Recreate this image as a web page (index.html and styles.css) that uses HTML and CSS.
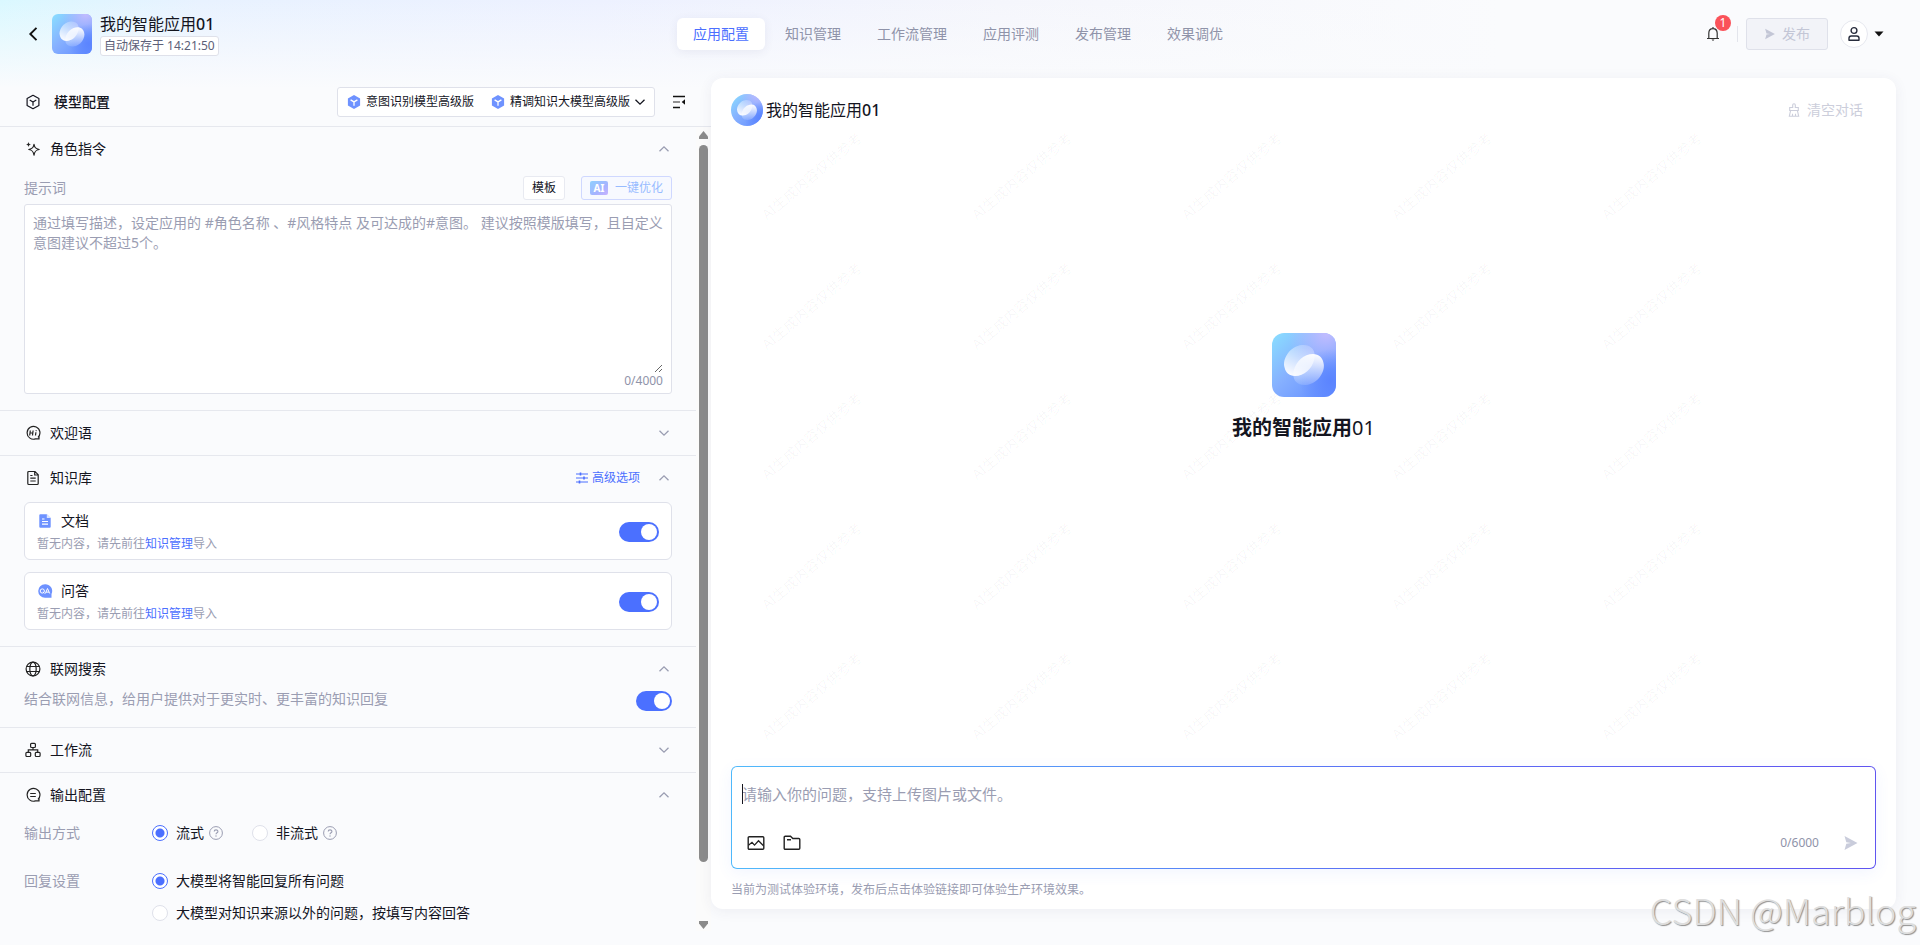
FILE: index.html
```html
<!DOCTYPE html>
<html lang="zh-CN">
<head>
<meta charset="utf-8">
<meta name="viewport" content="width=device-width, initial-scale=1">
<title>我的智能应用01</title>
<link rel="stylesheet" href="styles.css">
</head>
<body>
<svg class="sprite" aria-hidden="true">
  <defs>
    <linearGradient id="lg-base" x1="0" y1="0" x2="1" y2="1">
      <stop offset="0" stop-color="#8adfff"/><stop offset="0.45" stop-color="#86b0ff"/><stop offset="1" stop-color="#5f8aff"/>
    </linearGradient>
    <radialGradient id="lg-violet" cx="0.85" cy="0" r="0.6">
      <stop offset="0" stop-color="#c3bcff"/><stop offset="1" stop-color="#b4b8ff" stop-opacity="0"/>
    </radialGradient>
    <radialGradient id="lg-blue" cx="0.92" cy="0.75" r="0.5">
      <stop offset="0" stop-color="#5b84ff"/><stop offset="1" stop-color="#5b84ff" stop-opacity="0"/>
    </radialGradient>
    <linearGradient id="lg-a" x1="0.7" y1="0" x2="0.3" y2="1">
      <stop offset="0" stop-color="#fff" stop-opacity="0.1"/><stop offset="1" stop-color="#fff" stop-opacity="0.95"/>
    </linearGradient>
    <linearGradient id="lg-b" x1="0.6" y1="0" x2="0.4" y2="1">
      <stop offset="0" stop-color="#fff" stop-opacity="0.95"/><stop offset="1" stop-color="#fff" stop-opacity="0.15"/>
    </linearGradient>
    <linearGradient id="lg-ai" x1="0" y1="0" x2="1" y2="1">
      <stop offset="0" stop-color="#8fd0ff"/><stop offset="0.6" stop-color="#a5b4ff"/><stop offset="1" stop-color="#c9b2ff"/>
    </linearGradient>
  </defs>
  <symbol id="logo" viewBox="0 0 64 64">
    <rect width="64" height="64" fill="url(#lg-base)"/>
    <rect width="64" height="64" fill="url(#lg-violet)"/>
    <rect width="64" height="64" fill="url(#lg-blue)"/>
    <path d="M12.600 34.500C10 26 18 13 30 12C40 11.500 44 18 42.400 26C40 36 32 43 23 43C17 43 13.500 39 12.600 34.500Z" fill="#fff" fill-opacity="0.15"/>
    <path d="M12.600 34.500C10 26 18 13 30 12C40 11.500 44 18 42.400 26C40 36 32 43 23 43C17 43 13.500 39 12.600 34.500Z" fill="url(#lg-a)"/>
    <path d="M51.400 29.500C54 38 46 51 34 52C24 52.500 20 46 21.600 38C24 28 32 21 41 21C47 21 50.500 25 51.400 29.500Z" fill="url(#lg-b)"/>
  </symbol>
  <symbol id="up" viewBox="0 0 16 16"><path d="M3.500 10.300L8 5.800l4.500 4.500" fill="none" stroke="currentColor" stroke-width="1.300"/></symbol>
  <symbol id="down" viewBox="0 0 16 16"><path d="M3.500 5.700L8 10.200l4.500-4.500" fill="none" stroke="currentColor" stroke-width="1.300"/></symbol>
  <symbol id="cube" viewBox="0 0 16 16"><path d="M8 1.300l5.900 3.300v6.800L8 14.700l-5.900-3.300V4.600z" fill="none" stroke="currentColor" stroke-width="1.200" stroke-linejoin="round"/><path d="M4.700 6.100L8 8l3.300-1.900M8 8v3.700" fill="none" stroke="currentColor" stroke-width="1.200"/></symbol>
  <symbol id="cube-fill" viewBox="0 0 16 16"><path d="M8 1l6.100 3.500v7L8 15l-6.100-3.500v-7z" fill="#6e92ff"/><path d="M4.600 5.900L8 7.900l3.400-2M8 7.900v3.900" fill="none" stroke="#fff" stroke-width="1.300"/></symbol>
  <symbol id="help" viewBox="0 0 16 16"><circle cx="8" cy="8" r="6.400" fill="none" stroke="currentColor" stroke-width="1"/><path d="M6.200 6.500C6.200 4.300 9.900 4.300 9.900 6.400C9.900 7.700 8 7.700 8 9.200" fill="none" stroke="currentColor" stroke-width="1.100"/><circle cx="8" cy="11" r="0.700" fill="currentColor"/></symbol>
  <symbol id="plane" viewBox="0 0 16 16"><path d="M1.500 1l13 7-13 7 1.800-6.200L8 8 3.300 7.200z" fill="currentColor"/></symbol>
</svg>

<header class="topbar">
  <div class="brand">
    <button class="icon-btn back" aria-label="返回"><svg width="16" height="16" viewBox="0 0 16 16"><path d="M10.500 1.800L4.300 8l6.200 6.200" fill="none" stroke="#111" stroke-width="1.900"/></svg></button>
    <svg class="logo logo-sm"><use href="#logo"/></svg>
    <div class="brand-text">
      <h1 class="app-name">我的智能应用<span class="num">01</span></h1>
      <span class="saved">自动保存于 14:21:50</span>
    </div>
  </div>
  <nav class="tabs">
    <a class="tab active" href="#">应用配置</a>
    <a class="tab" href="#">知识管理</a>
    <a class="tab" href="#">工作流管理</a>
    <a class="tab" href="#">应用评测</a>
    <a class="tab" href="#">发布管理</a>
    <a class="tab" href="#">效果调优</a>
  </nav>
  <div class="actions">
    <button class="icon-btn bell" aria-label="通知">
      <svg width="16" height="16" viewBox="0 0 16 16"><path d="M2 12.500h12M3.800 12.300V7.200C3.800 1 12.200 1 12.200 7.200v5.100M8 1v1.500" fill="none" stroke="#333" stroke-width="1.200"/><path d="M6.500 13.500h3L8 15z" fill="#333"/></svg>
      <span class="badge">1</span>
    </button>
    <span class="divider"></span>
    <button class="publish" disabled><svg width="12" height="12"><use href="#plane"/></svg>发布</button>
    <button class="icon-btn user" aria-label="账户">
      <span class="user-ring"><svg width="14" height="16" viewBox="0 0 14 16"><circle cx="7" cy="4.500" r="2.900" fill="none" stroke="#272c3c" stroke-width="1.400"/><path d="M2 14.300v-2.100c0-1.500.8-2.200 2.200-2.200h5.600c1.400 0 2.200.7 2.200 2.200v2.100z" fill="none" stroke="#272c3c" stroke-width="1.400" stroke-linejoin="round"/></svg></span>
      <svg width="10" height="6" viewBox="0 0 10 6"><path d="M0.500 0.500h9L5 5.500z" fill="#111"/></svg>
    </button>
  </div>
</header>

<main class="workspace">
  <section class="config">
    <div class="config-head">
      <svg class="ico"><use href="#cube"/></svg>
      <h2 class="config-title">模型配置</h2>
      <button class="models">
        <svg class="ico"><use href="#cube-fill"/></svg><span class="model">意图识别模型高级版</span>
        <svg class="ico"><use href="#cube-fill"/></svg><span>精调知识大模型高级版</span>
        <svg class="ico ico-chev"><use href="#down"/></svg>
      </button>
      <button class="icon-btn" aria-label="收起"><svg width="16" height="16" viewBox="0 0 16 16"><path d="M2 2.500h12M2 13.500h7" stroke="#111" stroke-width="1.300"/><path d="M2 8h7" stroke="#777" stroke-width="1.600"/><path d="M14 5.300v5.400L10.700 8z" fill="#111"/></svg></button>
    </div>

    <div class="config-main">
      <div class="sections">
        <section class="section">
          <div class="section-head">
            <svg class="ico" viewBox="0 0 16 16"><path d="M9 3.400c.6 3.400 1.700 4.400 5.200 5.100-3.500.7-4.600 1.800-5.200 5.600-.6-3.800-1.700-4.900-5.200-5.600C7.300 7.800 8.400 6.800 9 3.400z" fill="none" stroke="#222" stroke-width="1.200" stroke-linejoin="round"/><path d="M3.500 .8c.3 1.800.9 2.400 2.600 2.700-1.700.3-2.300.9-2.600 2.700C3.200 4.400 2.600 3.800.9 3.500 2.600 3.200 3.200 2.600 3.500.8z" fill="#222"/></svg>
            <h3 class="section-title">角色指令</h3>
            <button class="icon-btn fold" aria-label="收起"><svg class="ico"><use href="#up"/></svg></button>
          </div>
          <div class="prompt-bar">
            <label class="muted" for="prompt">提示词</label>
            <button class="btn-template">模板</button>
            <button class="btn-ai" disabled><svg width="18" height="14" viewBox="0 0 18 14"><rect width="18" height="14" rx="2" fill="url(#lg-ai)"/><text class="ai-mark" x="9" y="11" text-anchor="middle">AI</text></svg>一键优化</button>
          </div>
          <div class="prompt-box">
            <textarea id="prompt" class="prompt" placeholder="通过填写描述，设定应用的 #角色名称 、#风格特点 及可达成的#意图。 建议按照模版填写，且自定义意图建议不超过5个。"></textarea>
            <span class="count">0/4000</span>
          </div>
        </section>

        <section class="section folded">
          <div class="section-head">
            <svg class="ico" viewBox="0 0 16 16"><path d="M13 12.400A6.400 6.400 0 1 0 10.500 13.900H14V11" fill="none" stroke="#222" stroke-width="1.200"/><path d="M5.300 5.500l-.6 5M8.100 5.500l-.6 5M5 8h2.800M10.900 7.300l-.4 3.200M11.200 5.200l-.1.900" stroke="#222" stroke-width="1.200"/></svg>
            <h3 class="section-title">欢迎语</h3>
            <button class="icon-btn fold" aria-label="展开"><svg class="ico"><use href="#down"/></svg></button>
          </div>
        </section>

        <section class="section">
          <div class="section-head">
            <svg class="ico" viewBox="0 0 16 16"><path d="M10 1.500H3.800a1 1 0 0 0-1 1v11a1 1 0 0 0 1 1h8.400a1 1 0 0 0 1-1V4.700zM9.700 1.500V5h3.500M5.300 5.500h2.200M5.300 8.200h5.400M5.300 11h5.400" fill="none" stroke="#222" stroke-width="1.200"/></svg>
            <h3 class="section-title">知识库</h3>
            <button class="advanced"><svg width="12" height="12" viewBox="0 0 12 12"><path d="M0 2h12M0 6h12M0 10h12" stroke="#4b6fff" stroke-width="1"/><path d="M4.500.5v3M8 4.500v3M3.500 8.500v3" stroke="#4b6fff" stroke-width="1.600"/></svg>高级选项</button>
            <button class="icon-btn fold" aria-label="收起"><svg class="ico"><use href="#up"/></svg></button>
          </div>
          <div class="cards">
            <div class="card">
              <div class="card-text">
                <label class="card-title" for="sw-doc"><svg class="ico" viewBox="0 0 16 16"><path d="M3.300 1.200h6.500l3.900 3.900v8.600a1 1 0 0 1-1 1H3.300a1 1 0 0 1-1-1V2.200a1 1 0 0 1 1-1z" fill="#6e92ff"/><path d="M9.800 1.200V5h3.900z" fill="#dbe4ff"/><path d="M5 6h2.500M5 8.500h6M5 11.200h6" stroke="#fff" stroke-width="1.200"/></svg>文档</label>
                <p class="card-sub">暂无内容，请先前往<a class="link" href="#">知识管理</a>导入</p>
              </div>
              <input class="switch" id="sw-doc" type="checkbox" role="switch" checked>
            </div>
            <div class="card">
              <div class="card-text">
                <label class="card-title" for="sw-qa"><svg class="ico" viewBox="0 0 16 16"><path d="M8 1.200A6.800 6.800 0 1 0 8 14.800H14.500V11A6.800 6.800 0 0 0 8 1.200z" fill="#6e92ff"/><circle cx="5.300" cy="8" r="2.100" fill="none" stroke="#fff" stroke-width="1"/><path d="M5.900 8.900l1.500 1.500M8.300 10.500L10.500 5.500l2.200 5M9 9.100h3" fill="none" stroke="#fff" stroke-width="1"/></svg>问答</label>
                <p class="card-sub">暂无内容，请先前往<a class="link" href="#">知识管理</a>导入</p>
              </div>
              <input class="switch" id="sw-qa" type="checkbox" role="switch" checked>
            </div>
          </div>
        </section>

        <section class="section">
          <div class="section-head">
            <svg class="ico" viewBox="0 0 16 16"><g fill="none" stroke="#222" stroke-width="1.200"><circle cx="8" cy="8" r="6.900"/><ellipse cx="8" cy="8" rx="3.200" ry="6.900"/><path d="M1.800 5.500h12.400M1.800 10.500h12.400"/></g></svg>
            <h3 class="section-title">联网搜索</h3>
            <button class="icon-btn fold" aria-label="收起"><svg class="ico"><use href="#up"/></svg></button>
          </div>
          <div class="web-row">
            <label class="web-desc" for="sw-web">结合联网信息，给用户提供对于更实时、更丰富的知识回复</label>
            <input class="switch switch-sm" id="sw-web" type="checkbox" role="switch" checked>
          </div>
        </section>

        <section class="section folded">
          <div class="section-head">
            <svg class="ico" viewBox="0 0 16 16"><g fill="none" stroke="#222" stroke-width="1.200"><rect x="5.600" y="1.300" width="4.800" height="4.200" rx="1"/><rect x="0.900" y="10.300" width="4.800" height="4.200" rx="1"/><rect x="10.300" y="10.300" width="4.800" height="4.200" rx="1"/><path d="M8 5.500v2.300M3.300 10.300V7.900h9.400v2.400"/></g></svg>
            <h3 class="section-title">工作流</h3>
            <button class="icon-btn fold" aria-label="展开"><svg class="ico"><use href="#down"/></svg></button>
          </div>
        </section>

        <section class="section last">
          <div class="section-head">
            <svg class="ico" viewBox="0 0 16 16"><path d="M13 12.400A6.400 6.400 0 1 0 10.500 13.900H14V11M5.200 6.500h5.600M5.200 9.500h5.600" fill="none" stroke="#222" stroke-width="1.200"/></svg>
            <h3 class="section-title">输出配置</h3>
            <button class="icon-btn fold" aria-label="收起"><svg class="ico"><use href="#up"/></svg></button>
          </div>
          <div class="field" role="radiogroup" aria-labelledby="out-mode">
            <span class="muted" id="out-mode">输出方式</span>
            <div class="options inline">
              <label class="option"><input class="radio" type="radio" name="mode" checked>流式<svg class="ico help"><use href="#help"/></svg></label>
              <label class="option"><input class="radio" type="radio" name="mode">非流式<svg class="ico help"><use href="#help"/></svg></label>
            </div>
          </div>
          <div class="field" role="radiogroup" aria-labelledby="reply-set">
            <span class="muted" id="reply-set">回复设置</span>
            <div class="options">
              <label class="option"><input class="radio" type="radio" name="reply" checked>大模型将智能回复所有问题</label>
              <label class="option"><input class="radio" type="radio" name="reply">大模型对知识来源以外的问题，按填写内容回答</label>
            </div>
          </div>
        </section>
      </div>
      <div class="scrollbar" aria-hidden="true">
        <svg width="9" height="8" viewBox="0 0 9 8"><path d="M4.500 0L9 5.500V8H0V5.500z" fill="#8b8b8b"/></svg>
        <div class="track"><div class="thumb"></div></div>
        <svg width="9" height="8" viewBox="0 0 9 8"><path d="M4.500 8L9 2.500V0H0v2.500z" fill="#8b8b8b"/></svg>
      </div>
    </div>
  </section>

  <section class="chat">
    <div class="watermarks" aria-hidden="true">
      <span>AI生成内容仅供参考</span><span>AI生成内容仅供参考</span><span>AI生成内容仅供参考</span><span>AI生成内容仅供参考</span><span>AI生成内容仅供参考</span>
      <span>AI生成内容仅供参考</span><span>AI生成内容仅供参考</span><span>AI生成内容仅供参考</span><span>AI生成内容仅供参考</span><span>AI生成内容仅供参考</span>
      <span>AI生成内容仅供参考</span><span>AI生成内容仅供参考</span><span>AI生成内容仅供参考</span><span>AI生成内容仅供参考</span><span>AI生成内容仅供参考</span>
      <span>AI生成内容仅供参考</span><span>AI生成内容仅供参考</span><span>AI生成内容仅供参考</span><span>AI生成内容仅供参考</span><span>AI生成内容仅供参考</span>
      <span>AI生成内容仅供参考</span><span>AI生成内容仅供参考</span><span>AI生成内容仅供参考</span><span>AI生成内容仅供参考</span><span>AI生成内容仅供参考</span>
    </div>
    <div class="chat-head">
      <svg class="logo logo-round"><use href="#logo"/></svg>
      <h2 class="chat-name">我的智能应用<span class="num">01</span></h2>
      <button class="clear" disabled><svg width="12" height="16" viewBox="0 0 12 16"><path d="M4.700 5.500V3a1.300 1.300 0 0 1 2.600 0v2.500h3v3H1.700v-3zM2.600 8.500L1.300 14.300h9.400L9.400 8.500M4.500 14v-2.300M7.500 14v-2.300" fill="none" stroke="currentColor" stroke-width="1.100"/></svg>清空对话</button>
    </div>
    <div class="intro">
      <svg class="logo logo-lg"><use href="#logo"/></svg>
      <p class="intro-name">我的智能应用<span class="intro-num">01</span></p>
    </div>
    <form class="composer">
      <div class="ask-wrap">
        <textarea class="ask" aria-label="输入问题" placeholder="请输入你的问题，支持上传图片或文件。"></textarea>
        <span class="caret"></span>
      </div>
      <div class="tools">
        <button type="button" class="icon-btn tool" aria-label="上传图片"><svg width="18" height="16" viewBox="0 0 18 16"><rect x="1.200" y="1.700" width="15.600" height="12.600" rx="1" fill="none" stroke="#222" stroke-width="1.400"/><path d="M1.500 10.300l3.500-3 2.500 2.800 4-4.300 5 5" fill="none" stroke="#222" stroke-width="1.300"/></svg></button>
        <button type="button" class="icon-btn tool" aria-label="上传文件"><svg width="18" height="16" viewBox="0 0 18 16"><path d="M1.200 13.300V2.200a1 1 0 0 1 1-1h5.300l2.300 2.300h6a1 1 0 0 1 1 1v8.800a1 1 0 0 1-1 1H2.200a1 1 0 0 1-1-1zM4 4.700h4" fill="none" stroke="#222" stroke-width="1.400"/></svg></button>
        <span class="count ask-count">0/6000</span>
        <button class="icon-btn tool send" aria-label="发送"><svg width="16" height="16"><use href="#plane"/></svg></button>
      </div>
    </form>
    <p class="notice">当前为测试体验环境，发布后点击体验链接即可体验生产环境效果。</p>
  </section>
</main>
<div class="stamp">CSDN @Marblog</div>
</body>
</html>
```

FILE: styles.css
```css
* { box-sizing: border-box; }

body {
  margin: 0;
  height: 100vh;
  display: flex;
  flex-direction: column;
  overflow: hidden;
  position: relative;
  font: 14px/20px "Noto Sans", "Noto Sans CJK SC", sans-serif;
  color: #14151f;
  background:
    linear-gradient(180deg, rgba(250, 251, 253, 0) 0, #fafbfd 88px),
    linear-gradient(90deg, #daf8ff 0, #e8f2ff 200px, #edf1ff 600px, #f5f6fc 1000px, #fafbfd 1500px);
}

h1, h2, h3, p { margin: 0; font-weight: 400; }
button, textarea { font: inherit; color: inherit; }
button { padding: 0; cursor: pointer; }
a { text-decoration: none; }

.sprite { position: absolute; width: 0; height: 0; }
.ico { width: 16px; height: 16px; flex: none; }
.icon-btn { display: flex; align-items: center; justify-content: center; border: 0; background: none; }
.muted { color: #9a9db2; }
.num { font-weight: 500; }

.logo { flex: none; overflow: hidden; }
.logo-sm { width: 40px; height: 40px; border-radius: 6px; }
.logo-round { width: 32px; height: 32px; border-radius: 50%; }
.logo-lg { width: 64px; height: 64px; border-radius: 12px; }

/* Top bar */
.topbar {
  flex: none;
  display: grid;
  grid-template-columns: 1fr auto 1fr;
  align-items: center;
  height: 68px;
  margin-bottom: 10px;
  padding: 0 36px 0 24px;
}
.brand { display: flex; align-items: center; }
.back { width: 20px; margin-right: 8px; }
.back svg { flex: none; }
.brand-text { display: flex; flex-direction: column; align-items: flex-start; margin-left: 8px; }
.app-name { font-size: 16px; line-height: 24px; }
.saved {
  padding: 0 3px;
  border: 1px solid #dfe1ea;
  border-radius: 3px;
  background: #fff;
  color: #5c6078;
  font-size: 12px;
  line-height: 18px;
}
.tabs { display: flex; gap: 4px; padding-left: 8px; }
.tab { padding: 0 16px; border-radius: 6px; line-height: 32px; color: #8f93a9; }
.tab.active { color: #4b6fff; background: #fff; box-shadow: 0 2px 10px rgba(60, 70, 120, 0.08); }
.actions { display: flex; align-items: center; justify-content: flex-end; }
.bell { position: relative; width: 16px; }
.badge {
  position: absolute;
  top: -11px;
  left: 10px;
  width: 16px;
  height: 16px;
  border-radius: 50%;
  background: #fa5259;
  color: #fff;
  font-size: 12px;
  line-height: 16px;
}
.divider { width: 1px; height: 16px; margin: 0 8px 0 16px; background: #e3e5ec; }
.publish {
  display: flex;
  align-items: center;
  justify-content: center;
  gap: 6px;
  width: 82px;
  height: 32px;
  border: 1px solid #dfe1ea;
  border-radius: 3px;
  background: #f2f3f8;
  color: #c3c6d6;
}
.user { gap: 6px; margin-left: 12px; }
.user-ring {
  display: flex;
  align-items: center;
  justify-content: center;
  width: 28px;
  height: 28px;
  border: 1px solid #e6e8ef;
  border-radius: 50%;
  background: #fff;
}

/* Workspace */
.workspace {
  flex: 1;
  min-height: 0;
  display: grid;
  grid-template-columns: 3fr 5fr;
  grid-template-rows: minmax(0, 1fr);
  padding-right: 24px;
}
.config { display: flex; flex-direction: column; min-width: 0; padding-bottom: 14px; }
.config-head {
  flex: none;
  display: flex;
  align-items: center;
  height: 49px;
  padding: 0 24px 0 25px;
  border-bottom: 1px solid #e6e8ee;
}
.config-title { flex: 1; margin-left: 13px; font-size: 14px; font-weight: 500; }
.models {
  display: flex;
  align-items: center;
  height: 30px;
  margin-right: 16px;
  padding: 0 6px 0 8px;
  border: 1px solid #dfe1ea;
  border-radius: 3px;
  background: #fff;
  font-size: 12px;
}
.models span { margin-left: 4px; }
.models .model { margin-right: 16px; }
.ico-chev { margin-left: 2px; }

.config-main { flex: 1; min-height: 0; display: flex; }
.sections { flex: 1; min-width: 0; overflow: hidden; }
.section { padding: 0 24px 16px; border-bottom: 1px solid #e6e8ee; }
.section.folded { padding-bottom: 0; }
.section.last { padding-bottom: 0; border-bottom: 0; }
.section-head { display: flex; align-items: center; height: 44px; padding-left: 1px; }
.section-title { flex: 1; margin-left: 9px; font-size: 14px; }
.fold { color: #9a9db2; }

.scrollbar {
  flex: none;
  display: flex;
  flex-direction: column;
  align-items: center;
  width: 15px;
  padding: 4px 0 2px;
  background: #fbfbfb;
}
.track { flex: 1; width: 9px; margin: 6px 0 5px; }
.thumb { height: 93%; border-radius: 5px; background: #8b8b8b; }

.prompt-bar { display: flex; align-items: center; height: 33px; }
.prompt-bar .muted { flex: 1; }
.btn-template, .btn-ai { height: 24px; border-radius: 3px; font-size: 12px; }
.btn-template { padding: 0 8px; border: 1px solid #e8eaf1; background: #fff; }
.btn-ai {
  display: flex;
  align-items: center;
  gap: 7px;
  margin-left: 16px;
  padding: 0 8px;
  border: 1px solid #cfd8ff;
  background: #f7f9ff;
  color: #98bcff;
}
.ai-mark { font: 700 10px "Noto Sans", sans-serif; fill: #fff; }
.prompt-box {
  display: flex;
  flex-direction: column;
  padding: 8px 8px 4px;
  border: 1px solid #dfe1ea;
  border-radius: 3px;
  background: #fff;
}
.prompt {
  width: 100%;
  height: 160px;
  padding: 0;
  border: 0;
  outline: 0;
  resize: vertical;
  background: none;
}
.prompt::placeholder, .ask::placeholder { color: #9a9db2; opacity: 1; }
.count { align-self: flex-end; font-size: 12px; line-height: 16px; color: #8f93a9; }

.advanced {
  display: flex;
  align-items: center;
  gap: 4px;
  margin-right: 16px;
  border: 0;
  background: none;
  font-size: 12px;
  color: #4b6fff;
}
.cards { display: flex; flex-direction: column; gap: 12px; padding-top: 2px; }
.card {
  display: flex;
  align-items: center;
  justify-content: space-between;
  padding: 6px 12px 4px;
  border: 1px solid #dfe1ea;
  border-radius: 6px;
  background: #fff;
}
.card-title { display: flex; align-items: center; gap: 8px; line-height: 24px; }
.card-sub { font-size: 12px; line-height: 22px; color: #9a9db2; }
.link { color: #4b6fff; }

.switch {
  appearance: none;
  flex: none;
  display: flex;
  align-items: center;
  justify-content: flex-end;
  width: 40px;
  height: 20px;
  margin: 0;
  padding: 0 2px;
  border-radius: 10px;
  background: #4b70ff;
}
.switch::before { content: ""; width: 16px; height: 16px; border-radius: 50%; background: #fff; }
.switch:not(:checked) { justify-content: flex-start; background: #c3c6d6; }
.switch-sm { width: 36px; }
.web-row { display: flex; justify-content: space-between; }
.web-desc { line-height: 16px; color: #9a9db2; }

.field { display: grid; grid-template-columns: 128px 1fr; line-height: 32px; }
.field + .field { margin-top: 16px; }
.options.inline { display: flex; gap: 28px; }
.option { display: flex; align-items: center; }
.radio {
  appearance: none;
  width: 16px;
  height: 16px;
  margin: 0 8px 0 0;
  border: 1px solid #dfe1ea;
  border-radius: 50%;
  background: #fff;
}
.radio:checked { border-color: #4b6fff; background: radial-gradient(circle, #4b6fff 4px, #fff 5px); }
.help { margin-left: 4px; color: #9a9db2; }

/* Chat preview */
.chat {
  position: relative;
  display: flex;
  flex-direction: column;
  min-width: 0;
  margin-bottom: 36px;
  padding: 16px 20px 9px;
  border-radius: 12px;
  background: #fff;
  box-shadow: 0 2px 14px rgba(50, 60, 100, 0.07);
}
.watermarks {
  position: absolute;
  top: 33px;
  left: -4px;
  display: grid;
  grid-template-columns: repeat(5, 210px);
  grid-auto-rows: 130px;
  place-items: center;
  color: rgba(20, 21, 31, 0.04);
  pointer-events: none;
}
.watermarks span { transform: rotate(-40deg); white-space: nowrap; }
.chat-head { display: flex; align-items: center; gap: 3px; }
.chat-name { flex: 1; font-size: 16px; line-height: 24px; }
.clear {
  display: flex;
  align-items: center;
  gap: 7px;
  margin-right: 13px;
  border: 0;
  background: none;
  color: #cccedb;
}
.intro {
  flex: 1;
  display: flex;
  flex-direction: column;
  align-items: center;
  justify-content: center;
  gap: 16px;
  padding-bottom: 116px;
}
.intro-name { font-size: 20px; line-height: 30px; font-weight: 700; }
.intro-num { font-weight: 400; }
.composer {
  display: flex;
  flex-direction: column;
  padding: 17px 10px 9px;
  border: 1px solid transparent;
  border-radius: 6px;
  background:
    linear-gradient(#fff, #fff) padding-box,
    linear-gradient(90deg, #4fb9fb, #5c6cf5 60%, #6055f0) border-box;
  box-shadow: 0 4px 16px rgba(75, 112, 255, 0.07);
}
.ask-wrap { position: relative; display: flex; }
.ask {
  flex: 1;
  height: 43px;
  padding: 0;
  border: 0;
  outline: 0;
  resize: none;
  background: none;
  font-size: 15px;
  line-height: 20px;
}
.caret { position: absolute; top: 0; left: 0; width: 1px; height: 20px; background: #14151f; }
.tools { display: flex; align-items: center; gap: 8px; height: 32px; }
.tool { width: 28px; height: 28px; }
.ask-count { flex: 1; align-self: center; text-align: right; margin-right: 10px; }
.send { color: #c9ccdb; }
.notice { margin-top: 11px; font-size: 12px; color: #9a9db2; }

.stamp {
  position: absolute;
  right: 4px;
  bottom: 14px;
  font: 300 36px/44px "Noto Sans CJK SC", "Liberation Sans", sans-serif;
  color: #dedede;
  text-shadow: 1px 1px 1px #8f8f8f;
  white-space: nowrap;
}
```
